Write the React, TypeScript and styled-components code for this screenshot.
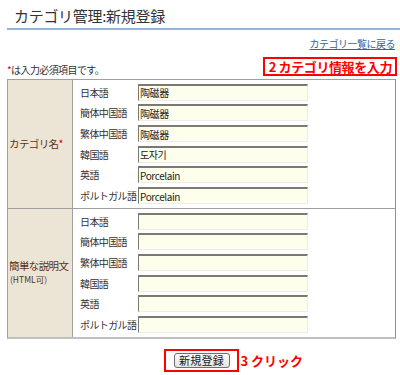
import React from "react";
import styled, { createGlobalStyle } from "styled-components";

const Global = createGlobalStyle`
  html, body { margin: 0; padding: 0; background: #fff; }
  body {
    font-family: "Noto Sans CJK JP", "Noto Sans", sans-serif;
    color: #333;
  }
  * { box-sizing: border-box; }
`;

const Page = styled.div`
  width: 400px;
  padding: 0 4px 0 7px;
`;

const Header = styled.h1`
  margin: 0 -4px 0 0;
  padding: 5px 0 0 7px;
  height: 30px;
  font-size: 15px;
  font-weight: normal;
  line-height: 21px;
  letter-spacing: -0.3px;
  color: #333;
  border-bottom: 2px solid #90b6de;
`;

const LinkRow = styled.div`
  display: flex;
  justify-content: flex-end;
  margin-top: 7px;
  padding-right: 1px;
  height: 13px;
  line-height: 13px;
`;

const BackLink = styled.a`
  font-size: 10px;
  letter-spacing: -0.5px;
  color: #33669a;
  text-decoration: underline;
`;

const NoteRow = styled.div`
  display: flex;
  justify-content: space-between;
  align-items: flex-end;
  margin-top: 7px;
  height: 19px;
  margin-right: -1px;
`;

const Note = styled.span`
  font-size: 10px;
  letter-spacing: -0.6px;
  line-height: 12px;
`;

const Req = styled.span`
  color: #e0001a;
`;

const Annotation = styled.span`
  display: inline-flex;
  align-items: center;
  border: 2px solid #ff0000;
  background: #fff;
  color: #ff0000;
  font-weight: bold;
  font-size: 13px;
  line-height: 15px;
  padding: 0 3px 0 4px;
  height: 19px;
  letter-spacing: -0.4px;
`;

const Table = styled.div`
  margin-top: 3px;
  border-top: 1px solid #a0a0a0;
  border-left: 1px solid #a0a0a0;
  border-right: 1px solid #909090;
  border-bottom: 2px solid #c0c0c0;
`;

const Section = styled.div<{ $last?: boolean }>`
  display: flex;
  border-bottom: ${(p) => (p.$last ? "none" : "1px solid #a0a0a0")};
`;

const LabelCell = styled.div`
  width: 65px;
  flex: none;
  background: #ece4d5;
  border-right: 1px solid #a0a0a0;
  display: flex;
  flex-direction: column;
  justify-content: center;
  padding-left: 1px;
  color: #5a3414;
`;

const LabelText = styled.span`
  font-size: 10.5px;
  line-height: 14px;
  letter-spacing: -0.6px;
  white-space: nowrap;
`;

const SubLabel = styled.span`
  font-size: 8.5px;
  line-height: 13px;
  letter-spacing: 0px;
  padding-left: 1px;
`;

const Fields = styled.div`
  flex: 1;
  padding: 2px 0 2px 7px;
  display: flex;
  flex-direction: column;
`;

const FieldRow = styled.div`
  display: flex;
  align-items: center;
  height: 20.67px;
`;

const Lang = styled.span`
  width: 58px;
  flex: none;
  font-size: 10px;
  letter-spacing: -0.6px;
  white-space: nowrap;
  color: #333;
`;

const TextInput = styled.input`
  width: 170px;
  height: 17px;
  padding: 0 1px;
  margin: 0;
  background: #fefeec;
  border-top: 2px solid #7a7a72;
  border-left: 1px solid #7a7a72;
  border-right: 1px solid #ececec;
  border-bottom: 1px solid #ececec;
  font-family: "Noto Sans CJK JP", "Noto Sans CJK KR", sans-serif;
  font-size: 10px;
  letter-spacing: -0.4px;
  color: #222;
  outline: none;
`;

const Footer = styled.div`
  display: flex;
  justify-content: center;
  margin-top: 10px;
  padding-right: 1px;
`;

const ButtonFrame = styled.div`
  position: relative;
  border: 2px solid #ff0000;
  padding: 2px 7px 2px 8px;
  display: flex;
`;

const SubmitButton = styled.button`
  width: 56px;
  height: 15px;
  padding: 0;
  border: 1px solid #6f6f6f;
  border-radius: 3px;
  background: linear-gradient(#fbfbfb, #e4e4e0);
  font-family: "Noto Sans CJK JP", sans-serif;
  font-size: 11px;
  line-height: 13px;
  letter-spacing: 0.3px;
  color: #222;
`;

const StepLabel = styled.span`
  position: absolute;
  left: calc(100% + 4px);
  top: 1px;
  color: #ff0000;
  font-weight: bold;
  font-size: 13px;
  line-height: 17px;
  white-space: nowrap;
`;

const langs = ["日本語", "簡体中国語", "繁体中国語", "韓国語", "英語", "ポルトガル語"];
const names = ["陶磁器", "陶磁器", "陶磁器", "도자기", "Porcelain", "Porcelain"];

export default function App() {
  return (
    <Page>
      <Global />
      <Header>カテゴリ管理:新規登録</Header>
      <LinkRow>
        <BackLink href="#">カテゴリ一覧に戻る</BackLink>
      </LinkRow>
      <NoteRow>
        <Note>
          <Req>*</Req>は入力必須項目です。
        </Note>
        <Annotation>2 カテゴリ情報を入力</Annotation>
      </NoteRow>
      <Table>
        <Section>
          <LabelCell>
            <LabelText>
              カテゴリ名<Req>*</Req>
            </LabelText>
          </LabelCell>
          <Fields>
            {langs.map((l, i) => (
              <FieldRow key={l}>
                <Lang>{l}</Lang>
                <TextInput defaultValue={names[i]} />
              </FieldRow>
            ))}
          </Fields>
        </Section>
        <Section $last>
          <LabelCell>
            <LabelText>簡単な説明文</LabelText>
            <SubLabel>(HTML可)</SubLabel>
          </LabelCell>
          <Fields>
            {langs.map((l) => (
              <FieldRow key={l}>
                <Lang>{l}</Lang>
                <TextInput defaultValue="" />
              </FieldRow>
            ))}
          </Fields>
        </Section>
      </Table>
      <Footer>
        <ButtonFrame>
          <SubmitButton type="button">新規登録</SubmitButton>
          <StepLabel>3 クリック</StepLabel>
        </ButtonFrame>
      </Footer>
    </Page>
  );
}
